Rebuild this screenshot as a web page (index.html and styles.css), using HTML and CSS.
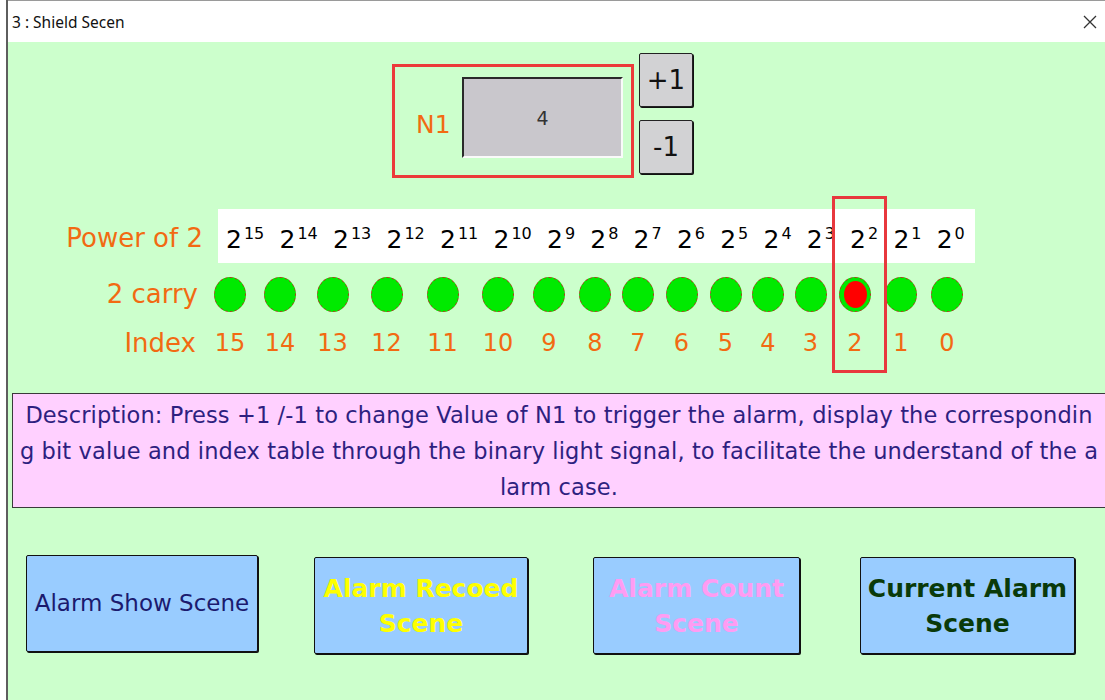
FILE: index.html
```html
<!DOCTYPE html>
<html>
<head>
<meta charset="utf-8">
<link rel="stylesheet" href="styles.css">
</head>
<body>
<div class="window">
  <div class="titlebar">
    <span class="title">3 : Shield Secen</span>
    <svg class="close" width="14" height="14" viewBox="0 0 14 14"><path d="M1 1 L13 13 M13 1 L1 13" stroke="#333" stroke-width="1.3" fill="none"/></svg>
  </div>
  <div class="content">
    <div class="n1-row">
      <div class="n1-box">
        <span class="n1-label">N1</span>
        <div class="n1-display">4</div>
      </div>
      <div class="steppers">
        <div class="step">+1</div>
        <div class="step">-1</div>
      </div>
    </div>

    <div class="power-row">
      <div class="label power-label">Power of 2</div>
      <div class="power-band">
        <span class="pw w2">2<sup>15</sup></span>
        <span class="pw w2">2<sup>14</sup></span>
        <span class="pw w2">2<sup>13</sup></span>
        <span class="pw w2">2<sup>12</sup></span>
        <span class="pw w2">2<sup>11</sup></span>
        <span class="pw w2">2<sup>10</sup></span>
        <span class="pw w1">2<sup>9</sup></span>
        <span class="pw w1">2<sup>8</sup></span>
        <span class="pw w1">2<sup>7</sup></span>
        <span class="pw w1">2<sup>6</sup></span>
        <span class="pw w1">2<sup>5</sup></span>
        <span class="pw w1">2<sup>4</sup></span>
        <span class="pw w1">2<sup>3</sup></span>
        <span class="pw w1">2<sup>2</sup></span>
        <span class="pw w1">2<sup>1</sup></span>
        <span class="pw w1">2<sup>0</sup></span>
      </div>
    </div>

    <div class="bits">
      <div class="label carry-label">2 carry</div>
      <span class="dot"></span><span class="dot"></span><span class="dot"></span><span class="dot"></span>
      <span class="dot"></span><span class="dot"></span><span class="dot"></span><span class="dot"></span>
      <span class="dot"></span><span class="dot"></span><span class="dot"></span><span class="dot"></span>
      <span class="dot"></span><span class="dot"><span class="core"></span></span><span class="dot"></span><span class="dot"></span>

      <div class="label index-label">Index</div>
      <span class="idx">15</span><span class="idx">14</span><span class="idx">13</span><span class="idx">12</span>
      <span class="idx">11</span><span class="idx">10</span><span class="idx">9</span><span class="idx">8</span>
      <span class="idx">7</span><span class="idx">6</span><span class="idx">5</span><span class="idx">4</span>
      <span class="idx">3</span><span class="idx">2</span><span class="idx">1</span><span class="idx">0</span>
    </div>

    <div class="highlight"></div>

    <div class="desc">
      <div class="line"><span>Description: Press +1 /-1 to change Value of N1 to trigger the alarm, display the correspondin</span></div>
      <div class="line"><span>g bit value and index table through the binary light signal, to facilitate the understand of the a</span></div>
      <div class="line"><span>larm case.</span></div>
    </div>

    <div class="buttons">
      <div class="btn b1">Alarm Show Scene</div>
      <div class="btn b2">Alarm Recoed<br>Scene</div>
      <div class="btn b3">Alarm Count<br>Scene</div>
      <div class="btn b4">Current Alarm<br>Scene</div>
    </div>
  </div>
</div>
</body>
</html>
```

FILE: styles.css
```css
html, body {
  margin: 0;
  padding: 0;
}

body {
  width: 1105px;
  height: 700px;
  overflow: hidden;
  background: #ffffff;
  font-family: "DejaVu Sans", sans-serif;
}

.window {
  margin-left: 6px;
  border-left: 2px solid #5e5e5e;
  height: 700px;
  display: flex;
  flex-direction: column;
}

.titlebar {
  height: 41px;
  border-top: 1px solid #9a9a9a;
  background: #ffffff;
  display: flex;
  align-items: center;
  justify-content: space-between;
  padding: 0 8px 0 4px;
  flex: none;
}

.title {
  font-family: "Noto Sans", "Open Sans", sans-serif;
  font-size: 15.5px;
  color: #111;
}

.close {
  display: block;
}

.content {
  position: relative;
  flex: 1;
  background: #ccffcc;
  overflow: hidden;
}

/* N1 section */
.n1-row {
  display: flex;
  align-items: flex-start;
  margin-left: 384px;
  padding-top: 11px;
}

.n1-box {
  margin-top: 11px;
  width: 242px;
  height: 114px;
  box-sizing: border-box;
  border: 3px solid #ec3a3a;
  display: flex;
  align-items: flex-start;
  padding: 10px 0 0 21px;
}

.n1-label {
  margin-top: 33px;
  line-height: 30px;
  font-size: 25px;
  color: #f26a12;
  width: 46px;
  flex: none;
}

.n1-display {
  width: 161px;
  height: 81px;
  flex: none;
  box-sizing: border-box;
  background: #c9c7cc;
  border-top: 2px solid #2a2a2a;
  border-left: 2px solid #2a2a2a;
  border-right: 2px solid #fafafa;
  border-bottom: 2px solid #fafafa;
  display: flex;
  align-items: center;
  justify-content: center;
  font-size: 19px;
  color: #333;
}

.steppers {
  margin-left: 5px;
  display: flex;
  flex-direction: column;
  gap: 13px;
}

.step {
  width: 54px;
  height: 54px;
  box-sizing: border-box;
  background: #d2d2d4;
  border: 1px solid #222;
  box-shadow: 1px 1px 0 #111;
  border-radius: 2px;
  display: flex;
  align-items: center;
  justify-content: center;
  font-size: 26px;
  color: #111;
}

/* power row */
.power-row {
  display: flex;
  align-items: center;
  margin-top: 31px;
}

.label {
  color: #f26a12;
  font-size: 26px;
  white-space: nowrap;
}

.power-label {
  width: 195px;
  text-align: right;
  padding-top: 4px;
}

.power-band {
  margin-left: 15px;
  width: 757px;
  height: 54px;
  box-sizing: border-box;
  background: #ffffff;
  display: flex;
  align-items: center;
  padding-left: 8px;
  padding-top: 6px;
}

.pw {
  font-size: 25px;
  color: #000;
  white-space: nowrap;
  flex: none;
}

.pw sup {
  font-size: 16px;
  line-height: 0;
  vertical-align: 9px;
  margin-left: 2px;
}

.w2 { width: 53.5px; }
.w1 { width: 43.3px; }

/* bits grid */
.bits {
  display: grid;
  grid-template-columns: 198px 48px 52px 53px 55px 57px 54px 48px 44px 42px 45px 43px 42px 43px 46px 46px 46px;
  grid-template-rows: 38px 36px;
  row-gap: 12px;
  margin-top: 12px;
  align-items: center;
  justify-items: center;
}

.carry-label {
  justify-self: end;
  padding-right: 8px;
}

.index-label {
  justify-self: end;
  padding-right: 10px;
}

.dot {
  width: 32px;
  height: 35px;
  box-sizing: border-box;
  border-radius: 50%;
  background: #00ea00;
  border: 1px dashed #9a4a1a;
  display: flex;
  align-items: center;
  justify-content: center;
}

.core {
  width: 23px;
  height: 27px;
  border-radius: 50%;
  background: #ff0000;
}

.idx {
  color: #f26a12;
  font-size: 24px;
}

.highlight {
  position: absolute;
  left: 824px;
  top: 154px;
  width: 55px;
  height: 177px;
  box-sizing: border-box;
  border: 3px solid #e8383d;
}

/* description */
.desc {
  margin-top: 32px;
  margin-left: 4px;
  width: 1093px;
  height: 115px;
  box-sizing: border-box;
  background: #ffd0ff;
  border: 1px solid #3a3a3a;
  border-right: none;
  padding-top: 3px;
  overflow: hidden;
  color: #2e1f80;
  font-size: 22.5px;
  letter-spacing: 0.12px;
  line-height: 36px;
}

.line {
  display: flex;
  justify-content: center;
  white-space: nowrap;
}

.line span {
  flex: none;
}

/* bottom buttons */
.buttons {
  display: flex;
  align-items: flex-start;
  margin-top: 47px;
}

.btn {
  height: 97px;
  box-sizing: border-box;
  background: #99ccff;
  border: 1px solid #111;
  box-shadow: 1px 1px 0 #111;
  border-radius: 2px;
  display: flex;
  align-items: center;
  justify-content: center;
  text-align: center;
  line-height: 35px;
}

.b1 {
  margin-left: 18px;
  width: 232px;
  font-size: 23px;
  color: #1b1a6e;
}

.b2 {
  margin-left: 56px;
  margin-top: 2px;
  width: 214px;
  font-size: 25px;
  font-weight: bold;
  color: #ffff00;
}

.b3 {
  margin-left: 65px;
  margin-top: 2px;
  width: 207px;
  font-size: 25px;
  font-weight: bold;
  color: #ff9cf2;
}

.b4 {
  margin-left: 60px;
  margin-top: 2px;
  width: 215px;
  font-size: 25px;
  font-weight: bold;
  color: #0a3a0a;
}
```
